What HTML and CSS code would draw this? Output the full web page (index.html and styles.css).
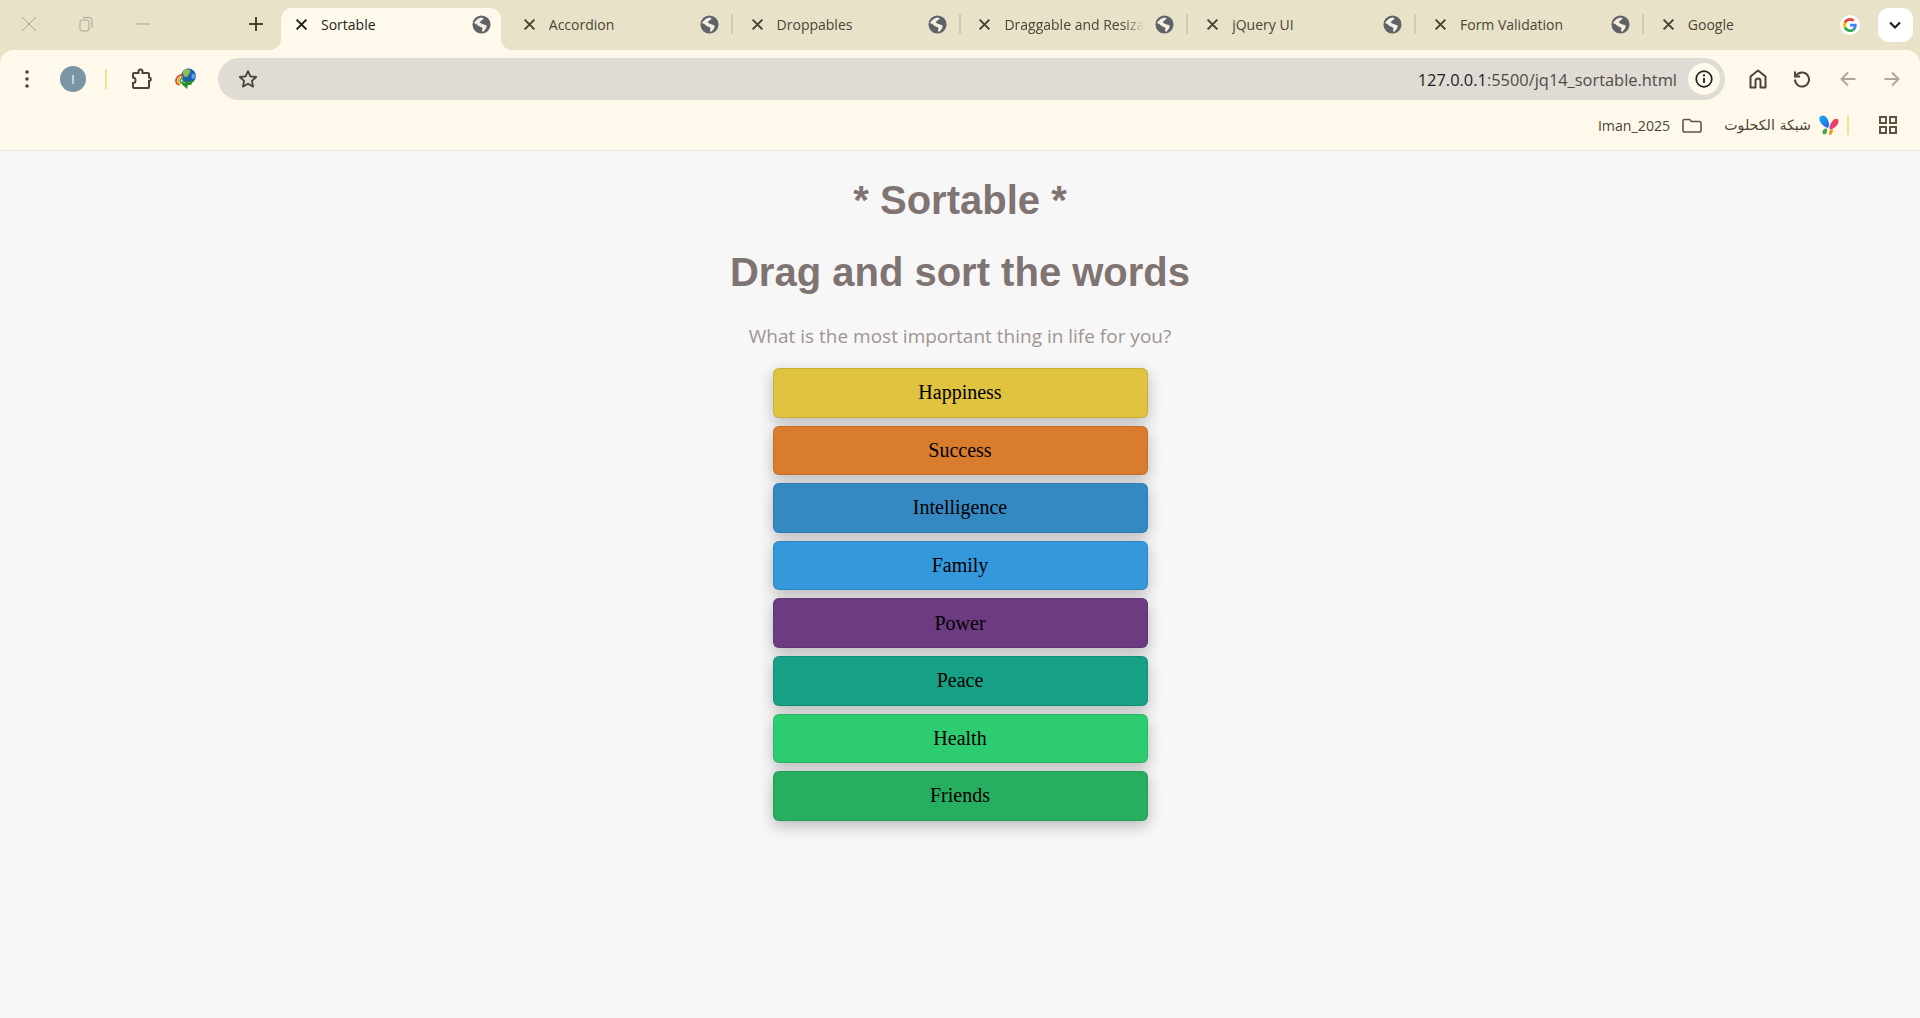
FILE: index.html
```html
<!DOCTYPE html>
<html>
  <head>
    <title>Sortable</title>
    <link rel="stylesheet" href="styles.css">
  </head>
  <body>

    <svg class="sprites" width="0" height="0">
      <symbol id="x" viewBox="0 0 12 12"><path d="M1.5 1.5l9 9M10.5 1.5l-9 9" fill="none" stroke="currentColor" stroke-width="1.9"/></symbol>
      <symbol id="globe" viewBox="0 0 20 20">
        <circle cx="10" cy="10" r="9.500" fill="#5f6368"/>
        <path d="M2 8.500C4.500 4.500 7 3 10.500 2.500L12.500 4 9.500 6 8 8 11 9.500 15.500 11 15 14 12 17.500 10.500 17 11 13.500 7 11.500 4.500 9.500z" fill="#f4efe2"/>
      </symbol>
    </svg>

    <div class="tabStrip">
      <div class="winControls">
        <span class="winBtn">
          <svg width="16" height="16" viewBox="0 0 16 16"><path d="M1 1l14 14M15 1L1 15" stroke="#a9a594" stroke-width="1" fill="none"/></svg>
        </span>
        <span class="winBtn">
          <svg width="14" height="16" viewBox="0 0 14 16"><rect x="1" y="4" width="9" height="11" rx="2" fill="none" stroke="#a9a594"/><path d="M4 1.500h6a3 3 0 0 1 3 3V12" fill="none" stroke="#a9a594"/></svg>
        </span>
        <span class="winBtn">
          <svg width="14" height="2" viewBox="0 0 14 2"><path d="M0 1h14" stroke="#a9a594"/></svg>
        </span>
      </div>
      <span class="newTab">
        <svg width="14" height="14" viewBox="0 0 14 14"><path d="M7 0v14M0 7h14" stroke="#4a4536" stroke-width="2"/></svg>
      </span>

      <div class="tabs">
        <div class="tab active">
          <svg class="tabClose"><use href="#x"/></svg>
          <span class="tabTitle">Sortable</span>
          <svg class="tabIcon"><use href="#globe"/></svg>
        </div>
        <div class="tab sep">
          <svg class="tabClose"><use href="#x"/></svg>
          <span class="tabTitle">Accordion</span>
          <svg class="tabIcon"><use href="#globe"/></svg>
        </div>
        <div class="tab sep">
          <svg class="tabClose"><use href="#x"/></svg>
          <span class="tabTitle">Droppables</span>
          <svg class="tabIcon"><use href="#globe"/></svg>
        </div>
        <div class="tab sep">
          <svg class="tabClose"><use href="#x"/></svg>
          <span class="tabTitle fade">Draggable and Resiza</span>
          <svg class="tabIcon"><use href="#globe"/></svg>
        </div>
        <div class="tab sep">
          <svg class="tabClose"><use href="#x"/></svg>
          <span class="tabTitle">jQuery UI</span>
          <svg class="tabIcon"><use href="#globe"/></svg>
        </div>
        <div class="tab sep">
          <svg class="tabClose"><use href="#x"/></svg>
          <span class="tabTitle">Form Validation</span>
          <svg class="tabIcon"><use href="#globe"/></svg>
        </div>
        <div class="tab">
          <svg class="tabClose"><use href="#x"/></svg>
          <span class="tabTitle">Google</span>
          <svg class="tabIcon googleIcon" viewBox="0 0 20 20">
            <circle cx="10" cy="10" r="10" fill="#fff"/>
            <path d="M16.700 10.200c0-.6-.1-1.100-.2-1.500H10v2.800h3.700c-.2.900-.7 1.700-1.400 2.200l2.200 1.700c1.400-1.200 2.200-3 2.200-5.200z" fill="#4285f4"/>
            <path d="M10 17c1.900 0 3.400-.6 4.500-1.600l-2.200-1.700c-.6.400-1.400.7-2.300.7-1.800 0-3.300-1.200-3.900-2.800L3.800 13.300C4.900 15.500 7.300 17 10 17z" fill="#34a853"/>
            <path d="M6.100 11.600c-.3-1-.3-2.200 0-3.200L3.800 6.700c-1 1.900-1 4.700 0 6.600z" fill="#fbbc05"/>
            <path d="M10 5.800c1 0 1.900.4 2.600 1l2-2C13.400 3.700 11.800 3 10 3 7.300 3 4.900 4.500 3.800 6.700l2.300 1.700C6.700 6.900 8.200 5.800 10 5.800z" fill="#ea4335"/>
          </svg>
        </div>
      </div>

      <span class="tabSearch">
        <svg width="14" height="9" viewBox="0 0 14 9"><path d="M2 1.500l5 5 5-5" fill="none" stroke="#1f1f1f" stroke-width="2.200"/></svg>
      </span>
    </div>

    <div class="chrome">
      <div class="toolbar">
        <span class="tbBtn kebab">
          <svg width="4" height="18" viewBox="0 0 4 18"><circle cx="2" cy="2" r="1.800"/><circle cx="2" cy="9" r="1.800"/><circle cx="2" cy="16" r="1.800"/></svg>
        </span>
        <span class="avatar">I</span>
        <span class="yellowSep"></span>
        <span class="tbBtn puzzle">
          <svg width="20" height="22" viewBox="0 0 20 22"><path d="M2 5h4.500V3.500a2 2 0 0 1 4 0V5H16a1 1 0 0 1 1 1v3.500h.5a1.800 1.800 0 0 1 0 3.500H17v6a1 1 0 0 1-1 1H2a1 1 0 0 1-1-1v-4a2.500 2.500 0 0 0 2.500-2.500A2.500 2.500 0 0 0 1 9.500V6a1 1 0 0 1 1-1z" fill="none" stroke="#4a4536" stroke-width="2"/></svg>
        </span>
        <span class="tbBtn idm">
          <svg width="22" height="22" viewBox="0 0 22 22">
            <circle cx="13.500" cy="8" r="7.500" fill="#1f5fb8"/>
            <path d="M9 2c2-1 5-1 6 0s0 3-1 4-1 3-3 3-2-2-3-3 0-3 1-4z" fill="#8cc152"/>
            <path d="M17 6c1.500-.5 3 .5 3.500 2s-1 3-2 3-2-1-2-2 0-2.500.5-3z" fill="#5aa2e0"/>
            <path d="M7 6.500C3.500 7.500 1 10 1 13c0 2 1.500 3.500 3.500 4" fill="none" stroke="#d9432d" stroke-width="1.600"/>
            <path d="M7.500 8C5 9 3 10.500 3 13c0 1.500 1 2.500 2.500 3" fill="none" stroke="#eeb422" stroke-width="1.600"/>
            <path d="M8 10c-2 .5-3 1.500-3 3 0 1 .7 1.800 2 2" fill="none" stroke="#5fae3a" stroke-width="1.600"/>
            <path d="M6.500 12.500l3 2.500 2-2.500 2 1 5-1.500-2.500 5h-3l-1 4-5-4.500z" fill="#2f8f2a"/>
          </svg>
        </span>
        <div class="omnibox">
          <svg class="star" width="20" height="20" viewBox="0 0 20 20"><path d="M10 2l2.400 5.400 5.800.6-4.300 3.900 1.200 5.700L10 14.700l-5.100 2.900 1.200-5.700L1.800 8l5.800-.6z" fill="none" stroke="#4a4536" stroke-width="1.800" stroke-linejoin="round"/></svg>
          <span class="url"><b>127.0.0.1</b>:5500/jq14_sortable.html</span>
          <span class="siteInfo">
            <svg width="18" height="18" viewBox="0 0 18 18"><circle cx="9" cy="9" r="7.800" fill="none" stroke="#1f1f1f" stroke-width="1.700"/><path d="M9 8v5" stroke="#1f1f1f" stroke-width="1.800"/><circle cx="9" cy="5.400" r="1.100" fill="#1f1f1f"/></svg>
          </span>
        </div>
        <span class="tbBtn home">
          <svg width="18" height="20" viewBox="0 0 18 20"><path d="M9 1.500L1.500 7.500V18.500H6.500V12a2.500 2.500 0 0 1 5 0V18.500H16.500V7.500z" fill="none" stroke="#4a4536" stroke-width="2" stroke-linejoin="round"/></svg>
        </span>
        <span class="tbBtn reload">
          <svg width="18" height="18" viewBox="0 0 18 18"><path d="M3.300 5.500A7 7 0 1 1 2 9.500" fill="none" stroke="#4a4536" stroke-width="2"/><path d="M2 1.500V6.500H7" fill="none" stroke="#4a4536" stroke-width="2"/></svg>
        </span>
        <span class="tbBtn nav back">
          <svg width="16" height="16" viewBox="0 0 16 16"><path d="M15.500 8H1.500M8 1.500L1.500 8 8 14.500" fill="none" stroke="#aca99c" stroke-width="2"/></svg>
        </span>
        <span class="tbBtn nav">
          <svg width="16" height="16" viewBox="0 0 16 16"><path d="M.5 8H14.500M8 1.500L14.500 8 8 14.500" fill="none" stroke="#aca99c" stroke-width="2"/></svg>
        </span>
      </div>

      <div class="bookmarks">
        <span class="bmText">Iman_2025</span>
        <svg class="bmFolder" width="20" height="15" viewBox="0 0 20 15"><path d="M1 3a1.500 1.500 0 0 1 1.500-1.500H7.500L9.500 3.500h8A1.500 1.500 0 0 1 19 5v7.500a1.500 1.500 0 0 1-1.500 1.500h-15A1.500 1.500 0 0 1 1 12.500z" fill="none" stroke="#5a5545" stroke-width="1.600"/></svg>
        <span class="bmText arabic" dir="rtl">شبكة الكحلوت</span>
        <svg class="bmLogo" width="20" height="20" viewBox="0 0 20 20">
          <defs>
            <linearGradient id="wingBlue" x1="0" y1="0" x2="1" y2="1"><stop offset="0" stop-color="#12b5f0"/><stop offset="1" stop-color="#2a5fe8"/></linearGradient>
            <linearGradient id="wingRed" x1="1" y1="0" x2="0" y2="1"><stop offset="0" stop-color="#f0424a"/><stop offset="1" stop-color="#e0409c"/></linearGradient>
          </defs>
          <path d="M.5 2.500C1.500 0 4.500-.2 6.500 1.500S10 6.500 10 9.500c0 1.500-.5 3-1.500 3.500C5.500 12 -.5 8 .5 2.500z" fill="url(#wingBlue)"/>
          <path d="M19.500 6C19.500 4 17 3 15 4.500S11 9 10.500 12c0 1 0 2 .5 2.500C15 14 19.500 10 19.500 6z" fill="url(#wingRed)"/>
          <path d="M8 13.500c-2.500-.5-4 1-4.500 3s.5 3 2 3c2 0 3-3 2.500-6z" fill="#4aa84a"/>
          <path d="M11 14.500c1.500-.5 3-.5 3 1S12.500 20 11 20s-1-3 0-5.500z" fill="#f59a1e"/>
        </svg>
        <span class="yellowSep small"></span>
        <svg class="bmGrid" width="18" height="18" viewBox="0 0 18 18"><g fill="none" stroke="#5a5545" stroke-width="2"><rect x="1" y="1" width="6" height="6"/><rect x="11" y="1" width="6" height="6"/><rect x="1" y="11" width="6" height="6"/><rect x="11" y="11" width="6" height="6"/></g></svg>
      </div>
    </div>

    <div class="page">
      <h1>* Sortable *</h1>
      <h1>Drag and sort the words</h1>
      <p class="question">What is the most important thing in life for you?</p>
      <ul class="sortable">
        <li class="yellow">Happiness</li>
        <li class="orange">Success</li>
        <li class="ocean">Intelligence</li>
        <li class="blue">Family</li>
        <li class="purple">Power</li>
        <li class="teal">Peace</li>
        <li class="lime">Health</li>
        <li class="green">Friends</li>
      </ul>
    </div>

  </body>
</html>
```

FILE: styles.css
```css
html, body { height: 100%; }
body { margin: 0; background: #f7f7f7; overflow: hidden; font-family: "Open Sans", "Noto Sans", sans-serif; }
.sprites { display: block; height: 0; }

/* tab strip */
.tabStrip { display: flex; align-items: flex-end; height: 50px; background: #e8e2c9; }
.winControls { display: flex; width: 171px; height: 50px; align-items: center; padding-bottom: 2px; box-sizing: border-box; }
.winBtn { flex: 1; display: flex; justify-content: center; align-items: center; }
.newTab { display: flex; justify-content: center; align-items: center; width: 28px; height: 50px; margin-left: 71px; margin-right: 11px; padding-bottom: 2px; box-sizing: border-box; }

.tabs { display: flex; gap: 7.8px; }
.tab { position: relative; display: flex; align-items: center; width: 220px; height: 42px; padding: 0 10px 9px 14px; box-sizing: border-box; color: #4a4536; }
.tab.active { background: #fef9ea; border-radius: 11px 11px 0 0; color: #1f1f1f; }
.tab.active::before, .tab.active::after { content: ""; position: absolute; bottom: 0; width: 12px; height: 12px; }
.tab.active::before { left: -12px; background: radial-gradient(circle at 0 0, transparent 12px, #fef9ea 12.5px); }
.tab.active::after { right: -12px; background: radial-gradient(circle at 100% 0, transparent 12px, #fef9ea 12.5px); }
.tab.sep::after { content: ""; position: absolute; right: -4px; top: 6px; width: 2px; height: 20px; background: #cfcab6; }

.tabClose { width: 13px; height: 13px; flex: none; }
.tabTitle { width: 146px; margin: 0 0 0 13px; flex: none; font-size: 14px; white-space: nowrap; overflow: hidden; }
.tabTitle.fade { -webkit-mask-image: linear-gradient(to right, #000 82%, transparent 96%); mask-image: linear-gradient(to right, #000 82%, transparent 96%); }
.tabIcon { width: 19px; height: 19px; margin-left: auto; flex: none; }
.googleIcon { width: 20px; height: 20px; margin-right: -2px; }

.tabSearch { display: flex; justify-content: center; align-items: center; width: 35px; height: 34px; margin: 0 0 8px 10px; background: #fff; border-radius: 11px; }

/* toolbar */
.chrome { background: #fef9ea; border-radius: 14px 14px 0 0; border-bottom: 1px solid #e6e3d8; height: 100px; margin-top: 0; position: relative; }
.chrome::before { content: ""; position: absolute; z-index: -1; left: 0; right: 0; top: 0; height: 20px; background: #e8e2c9; }
.toolbar { display: flex; align-items: center; height: 58px; }
.tbBtn { display: flex; justify-content: center; align-items: center; flex: none; color: #4a4536; }
.kebab { width: 4px; margin-left: 25px; fill: #4a4536; }
.avatar { display: flex; justify-content: center; align-items: center; width: 26px; height: 26px; margin-left: 31px; border-radius: 50%; background: #7b95a6; color: #fff; font-size: 12px; flex: none; }
.yellowSep { width: 2px; height: 20px; margin-left: 19px; background: #f3e38f; flex: none; }
.puzzle { width: 20px; margin-left: 25px; }
.idm { width: 22px; margin-left: 23px; }

.omnibox { display: flex; align-items: center; width: 1507px; height: 42px; margin-left: 21px; padding-left: 20px; padding-right: 5px; box-sizing: border-box; background: #e0dcd5; border-radius: 21px; flex: none; }
.star { flex: none; }
.url { margin-left: auto; font-size: 16.4px; color: #4f4c46; white-space: nowrap; }
.url b { font-weight: 400; color: #1f1f1f; }
.siteInfo { display: flex; justify-content: center; align-items: center; width: 32px; height: 32px; margin-left: 11px; border-radius: 50%; background: #fef9ea; flex: none; }

.home { width: 18px; margin-left: 24px; }
.reload { width: 18px; margin-left: 26px; }
.nav { width: 16px; margin-left: 28px; }
.nav.back { margin-left: 29px; }

.bookmarks { display: flex; justify-content: flex-end; align-items: center; height: 34px; padding-right: 23px; }
.bmText { font-size: 14.2px; color: #4a4536; white-space: nowrap; }
.arabic { font-family: "DejaVu Sans", sans-serif; font-size: 14.2px; margin-left: 22px; }
.bmFolder { margin-left: 12px; }
.bmLogo { margin-left: 8px; }
.yellowSep.small { margin-left: 8px; }
.bmGrid { margin-left: 30px; }

/* page */
.page { display: flex; flex-direction: column; align-items: center; color: #807472; }
h1 { margin: 0; padding-top: 26px; font: bold 40px/46px "Liberation Sans", Arial, sans-serif; text-align: center; }
.question { margin: 28px 0 0; font-size: 19px; line-height: 27px; color: #a09492; }

.sortable { list-style: none; margin: 18px 0 0; padding: 0; width: 375px; }
.sortable li { box-sizing: border-box; height: 49.6px; margin-bottom: 8px; display: flex; justify-content: center; align-items: center; border: 1px solid rgba(0, 0, 0, 0.1); border-radius: 6px; box-shadow: 0 5px 15px rgba(0, 0, 0, 0.25); font: 20px "Liberation Serif", "Times New Roman", serif; color: #000; }
.yellow { background: #e0c33e; }
.orange { background: #d97c2e; }
.ocean { background: #3589c3; }
.blue { background: #3498db; }
.purple { background: #6c3b81; }
.teal { background: #16a085; }
.lime { background: #2ecc71; }
.green { background: #27ae60; }
```
